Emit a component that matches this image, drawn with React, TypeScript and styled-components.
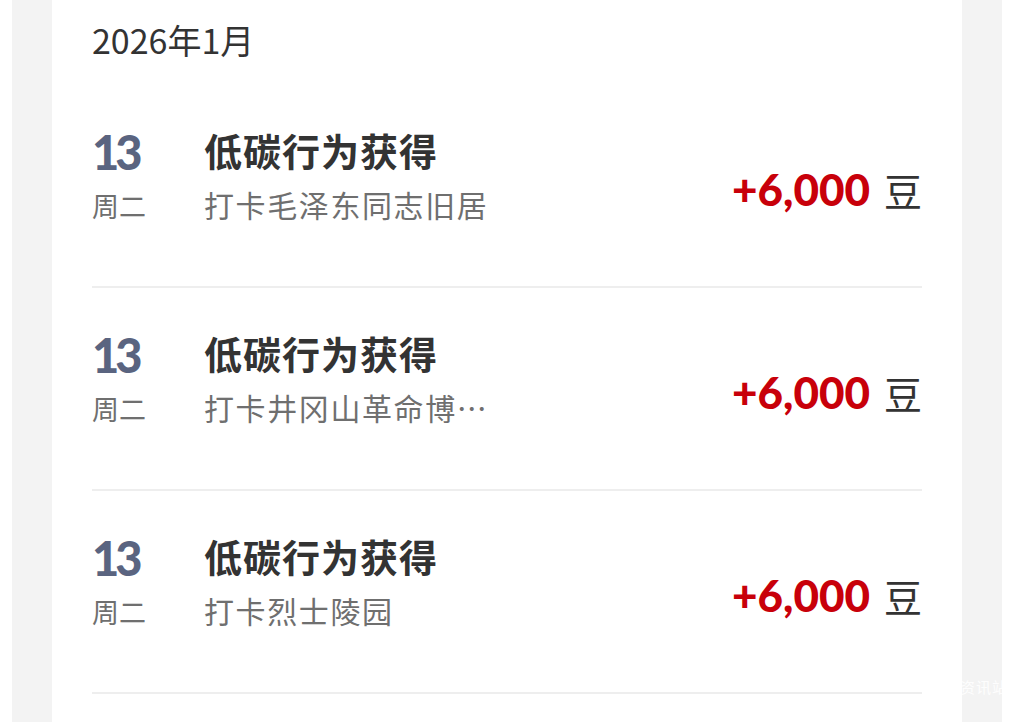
import { createGlobalStyle, styled } from "styled-components";

const GlobalStyle = createGlobalStyle`
  html, body {
    margin: 0;
    padding: 0;
    background: #ffffff;
  }
  body {
    font-family: "Noto Sans CJK SC", "Noto Sans", sans-serif;
    overflow: hidden;
  }
`;

const Page = styled.div`
  position: relative;
  width: 990px;
  min-height: 722px;
  margin-left: 12px;
  padding: 0 40px;
  box-sizing: border-box;
  background: #f3f3f3;
`;

const Card = styled.div`
  min-height: 722px;
  background: #ffffff;
  padding: 0 40px;
`;

const MonthTitle = styled.div`
  padding-top: 18px;
  margin-bottom: 23px;
  font-size: 34px;
  line-height: 44px;
  color: #333333;
`;

const Row = styled.div`
  display: flex;
  align-items: center;
  padding: 42px 0 62px;
  border-bottom: 2px solid #eeeeee;
`;

const DateCol = styled.div`
  width: 112px;
  flex-shrink: 0;
  display: flex;
  flex-direction: column;
  gap: 11px;
`;

const Day = styled.div`
  font-family: "Lato", "Noto Sans", sans-serif;
  font-weight: 900;
  font-size: 47px;
  line-height: 50px;
  letter-spacing: -4px;
  color: #5a6480;
`;

const Week = styled.div`
  font-size: 27px;
  line-height: 36px;
  color: #6f6f6f;
`;

const Main = styled.div`
  flex: 1;
  min-width: 0;
  display: flex;
  flex-direction: column;
  gap: 11px;
`;

const Title = styled.div`
  font-size: 38px;
  line-height: 46px;
  font-weight: 700;
  color: #333333;
  letter-spacing: 1px;
`;

const Sub = styled.div`
  font-size: 30px;
  line-height: 40px;
  color: #6f6f6f;
  letter-spacing: 1.6px;
  white-space: nowrap;
`;

const Amount = styled.div`
  margin-top: 28px;
  display: flex;
  align-items: baseline;
  gap: 14px;
  line-height: 50px;
`;

const Value = styled.span`
  font-family: "Lato", "Noto Sans", sans-serif;
  font-weight: 900;
  font-size: 44px;
  color: #c8000a;
`;

const Unit = styled.span`
  font-size: 38px;
  color: #333333;
`;

const Mark = styled.div`
  position: absolute;
  right: -6px;
  top: 676px;
  font-size: 15px;
  letter-spacing: 1px;
  color: rgba(255, 255, 255, 0.9);
`;

const records = [
  { day: "13", week: "周二", title: "低碳行为获得", sub: "打卡毛泽东同志旧居", amount: "+6,000" },
  { day: "13", week: "周二", title: "低碳行为获得", sub: "打卡井冈山革命博…", amount: "+6,000" },
  { day: "13", week: "周二", title: "低碳行为获得", sub: "打卡烈士陵园", amount: "+6,000" },
];

export default function App() {
  return (
    <>
      <GlobalStyle />
      <Page>
        <Card>
          <MonthTitle>2026年1月</MonthTitle>
          {records.map((r, i) => (
            <Row key={i}>
              <DateCol>
                <Day>{r.day}</Day>
                <Week>{r.week}</Week>
              </DateCol>
              <Main>
                <Title>{r.title}</Title>
                <Sub>{r.sub}</Sub>
              </Main>
              <Amount>
                <Value>{r.amount}</Value>
                <Unit>豆</Unit>
              </Amount>
            </Row>
          ))}
        </Card>
        <Mark>资讯站</Mark>
      </Page>
    </>
  );
}
